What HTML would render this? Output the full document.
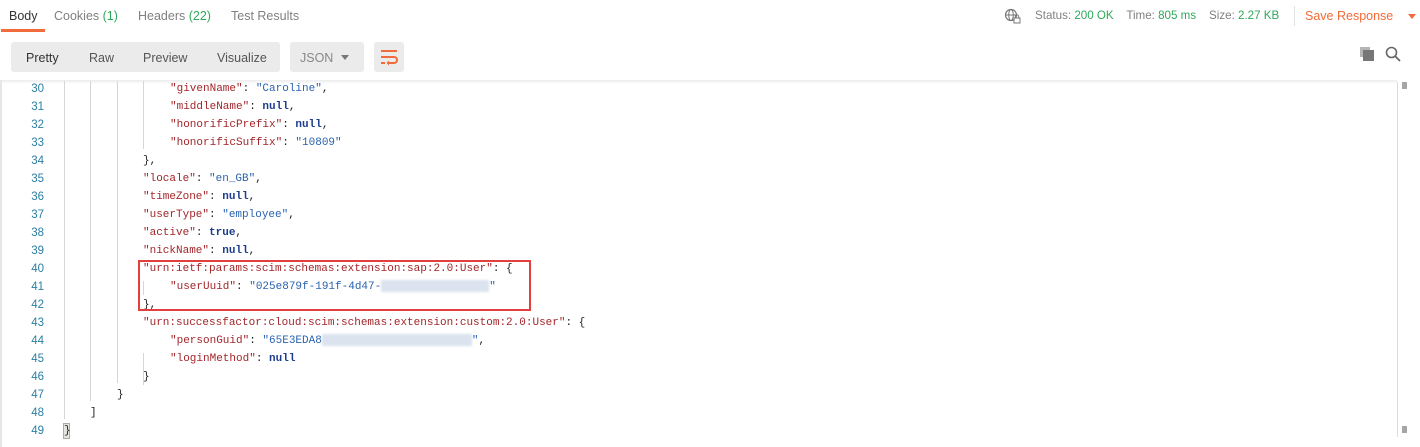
<!DOCTYPE html>
<html><head><meta charset="utf-8"><style>
*{margin:0;padding:0;box-sizing:border-box}
body{width:1420px;height:447px;background:#fff;font-family:"Liberation Sans",sans-serif;position:relative;overflow:hidden}
.a{position:absolute;white-space:nowrap}
.tab{font-size:12.5px;color:#808080;top:9px}
.g{color:#2fa85b}
.btn{font-size:12.5px;color:#555;top:51px}
.code{font-family:"Liberation Mono",monospace;font-size:11px;line-height:18px;position:absolute;left:0;top:2px;width:1420px;height:440px}
.ln{color:#2b7fa3;width:30px;text-align:right;left:14px;font-family:"Liberation Sans",sans-serif;font-size:11.5px}
.k{color:#a3262a}.s{color:#2a63b0}.n{color:#1b3c8f;font-weight:bold}.p{color:#222}
.guide{position:absolute;width:1px;background:#d6d6d6}
.blur{display:inline-block;height:12px;background:#dbe3ee;vertical-align:middle;filter:blur(1px)}
</style></head><body>
<div class="a tab" style="left:9px;color:#333">Body</div>
<div class="a" style="left:1px;top:29px;width:44px;height:3px;background:#f26b3a"></div>
<div class="a tab" style="left:54px">Cookies <span class="g">(1)</span></div>
<div class="a tab" style="left:138px">Headers <span class="g">(22)</span></div>
<div class="a tab" style="left:231px">Test Results</div>
<svg class="a" style="left:1004px;top:8px" width="18" height="16" viewBox="0 0 18 16"><circle cx="7" cy="7" r="5.5" fill="none" stroke="#777" stroke-width="1.2"/><ellipse cx="7" cy="7" rx="2.3" ry="5.5" fill="none" stroke="#777"/><line x1="1.5" y1="7" x2="12.5" y2="7" stroke="#777"/><rect x="10" y="10" width="6" height="5" fill="#fff" stroke="#777"/><path d="M11.3 10V8.5a1.7 1.7 0 0 1 3.4 0V10" fill="none" stroke="#777"/></svg>
<div class="a" style="left:1035px;top:9px;font-size:11.6px;color:#808080">Status: <span class="g">200 OK</span>&nbsp;&nbsp;&nbsp; Time: <span class="g">805 ms</span>&nbsp;&nbsp;&nbsp; Size: <span class="g">2.27 KB</span></div>
<div class="a" style="left:1294px;top:6px;width:1px;height:20px;background:#e3e3e3"></div>
<div class="a" style="left:1305px;top:9px;font-size:12.5px;color:#f26b3a">Save Response</div>
<svg class="a" style="left:1408px;top:14px" width="8" height="5"><path d="M0 0H8L4 5Z" fill="#f26b3a"/></svg>
<div class="a" style="left:11px;top:42px;width:269px;height:30px;background:#ebebeb;border-radius:3px"></div>
<div class="a btn" style="left:26px;color:#333">Pretty</div>
<div class="a btn" style="left:89px">Raw</div>
<div class="a btn" style="left:143px">Preview</div>
<div class="a btn" style="left:217px">Visualize</div>
<div class="a" style="left:290px;top:42px;width:74px;height:30px;background:#ebebeb;border-radius:3px"></div>
<div class="a btn" style="left:300px;color:#888">JSON</div>
<svg class="a" style="left:341px;top:55px" width="8" height="5"><path d="M0 0H8L4 5Z" fill="#777"/></svg>
<div class="a" style="left:374px;top:42px;width:30px;height:30px;background:#ebebeb;border-radius:3px"></div>
<svg class="a" style="left:378px;top:46px" width="22" height="22" viewBox="0 0 22 22"><g stroke="#f26b3a" stroke-width="2" fill="none"><path d="M3 5H19"/><path d="M3 11H16a3 3 0 0 1 0 6H10"/><path d="M3 17H7"/></g><path d="M11 14.5L8.5 17L11 19.5Z" fill="#f26b3a"/></svg>
<svg class="a" style="left:1359px;top:46px" width="16" height="16"><rect x="1" y="1" width="10" height="10" fill="#b5b5b5"/><rect x="4" y="4" width="11" height="11" fill="#777"/></svg>
<svg class="a" style="left:1385px;top:46px" width="16" height="16"><circle cx="6.5" cy="6.5" r="5" fill="none" stroke="#666" stroke-width="1.6"/><line x1="10" y1="10" x2="15" y2="15" stroke="#666" stroke-width="1.8"/></svg>
<div class="a" style="left:0;top:80px;width:1397px;height:4px;background:linear-gradient(#ececec,#fff)"></div>
<div class="a" style="left:0;top:80px;width:2px;height:367px;background:#e6e6e6"></div>
<div class="a" style="left:1397px;top:82px;width:1px;height:355px;background:#dcdcdc"></div>
<div class="a" style="left:1402px;top:82px;width:5px;height:7px;background:#a6a6a6"></div>
<div class="a" style="left:1402px;top:426px;width:5px;height:7px;background:#a6a6a6"></div>
<div class="guide" style="left:64px;top:81px;height:338px"></div>
<div class="guide" style="left:90px;top:81px;height:320px"></div>
<div class="guide" style="left:117px;top:81px;height:302px"></div>
<div class="guide" style="left:143px;top:81px;height:68px"></div>
<div class="guide" style="left:143px;top:281px;height:14px"></div>
<div class="guide" style="left:143px;top:353px;height:32px"></div>
<div class="a" style="left:63px;top:423px;width:7px;height:16px;background:#e2e6de;border:1px solid #aaa"></div>
<div class="code">
<div class="a ln" style="top:78px">30</div><div class="a" style="left:170px;top:78px"><span class="k">"givenName"</span><span class="p">: </span><span class="s">"Caroline"</span><span class="p">,</span></div>
<div class="a ln" style="top:96px">31</div><div class="a" style="left:170px;top:96px"><span class="k">"middleName"</span><span class="p">: </span><span class="n">null</span><span class="p">,</span></div>
<div class="a ln" style="top:114px">32</div><div class="a" style="left:170px;top:114px"><span class="k">"honorificPrefix"</span><span class="p">: </span><span class="n">null</span><span class="p">,</span></div>
<div class="a ln" style="top:132px">33</div><div class="a" style="left:170px;top:132px"><span class="k">"honorificSuffix"</span><span class="p">: </span><span class="s">"10809"</span></div>
<div class="a ln" style="top:150px">34</div><div class="a" style="left:143px;top:150px"><span class="p">},</span></div>
<div class="a ln" style="top:168px">35</div><div class="a" style="left:143px;top:168px"><span class="k">"locale"</span><span class="p">: </span><span class="s">"en_GB"</span><span class="p">,</span></div>
<div class="a ln" style="top:186px">36</div><div class="a" style="left:143px;top:186px"><span class="k">"timeZone"</span><span class="p">: </span><span class="n">null</span><span class="p">,</span></div>
<div class="a ln" style="top:204px">37</div><div class="a" style="left:143px;top:204px"><span class="k">"userType"</span><span class="p">: </span><span class="s">"employee"</span><span class="p">,</span></div>
<div class="a ln" style="top:222px">38</div><div class="a" style="left:143px;top:222px"><span class="k">"active"</span><span class="p">: </span><span class="n">true</span><span class="p">,</span></div>
<div class="a ln" style="top:240px">39</div><div class="a" style="left:143px;top:240px"><span class="k">"nickName"</span><span class="p">: </span><span class="n">null</span><span class="p">,</span></div>
<div class="a ln" style="top:258px">40</div><div class="a" style="left:143px;top:258px"><span class="k">"urn:ietf:params:scim:schemas:extension:sap:2.0:User"</span><span class="p">: {</span></div>
<div class="a ln" style="top:276px">41</div><div class="a" style="left:170px;top:276px"><span class="k">"userUuid"</span><span class="p">: </span><span class="s">"025e879f-191f-4d47-<span class="blur" style="width:108px"></span>"</span></div>
<div class="a ln" style="top:294px">42</div><div class="a" style="left:143px;top:294px"><span class="p">},</span></div>
<div class="a ln" style="top:312px">43</div><div class="a" style="left:143px;top:312px"><span class="k">"urn:successfactor:cloud:scim:schemas:extension:custom:2.0:User"</span><span class="p">: {</span></div>
<div class="a ln" style="top:330px">44</div><div class="a" style="left:170px;top:330px"><span class="k">"personGuid"</span><span class="p">: </span><span class="s">"65E3EDA8<span class="blur" style="width:150px"></span>"</span><span class="p">,</span></div>
<div class="a ln" style="top:348px">45</div><div class="a" style="left:170px;top:348px"><span class="k">"loginMethod"</span><span class="p">: </span><span class="n">null</span></div>
<div class="a ln" style="top:366px">46</div><div class="a" style="left:143px;top:366px"><span class="p">}</span></div>
<div class="a ln" style="top:384px">47</div><div class="a" style="left:117px;top:384px"><span class="p">}</span></div>
<div class="a ln" style="top:402px">48</div><div class="a" style="left:90px;top:402px"><span class="p">]</span></div>
<div class="a ln" style="top:420px">49</div><div class="a" style="left:64px;top:420px"><span class="p">}</span></div>
</div>
<div class="a" style="left:138px;top:260px;width:393px;height:51px;border:2px solid #e2403f"></div>
</body></html>
